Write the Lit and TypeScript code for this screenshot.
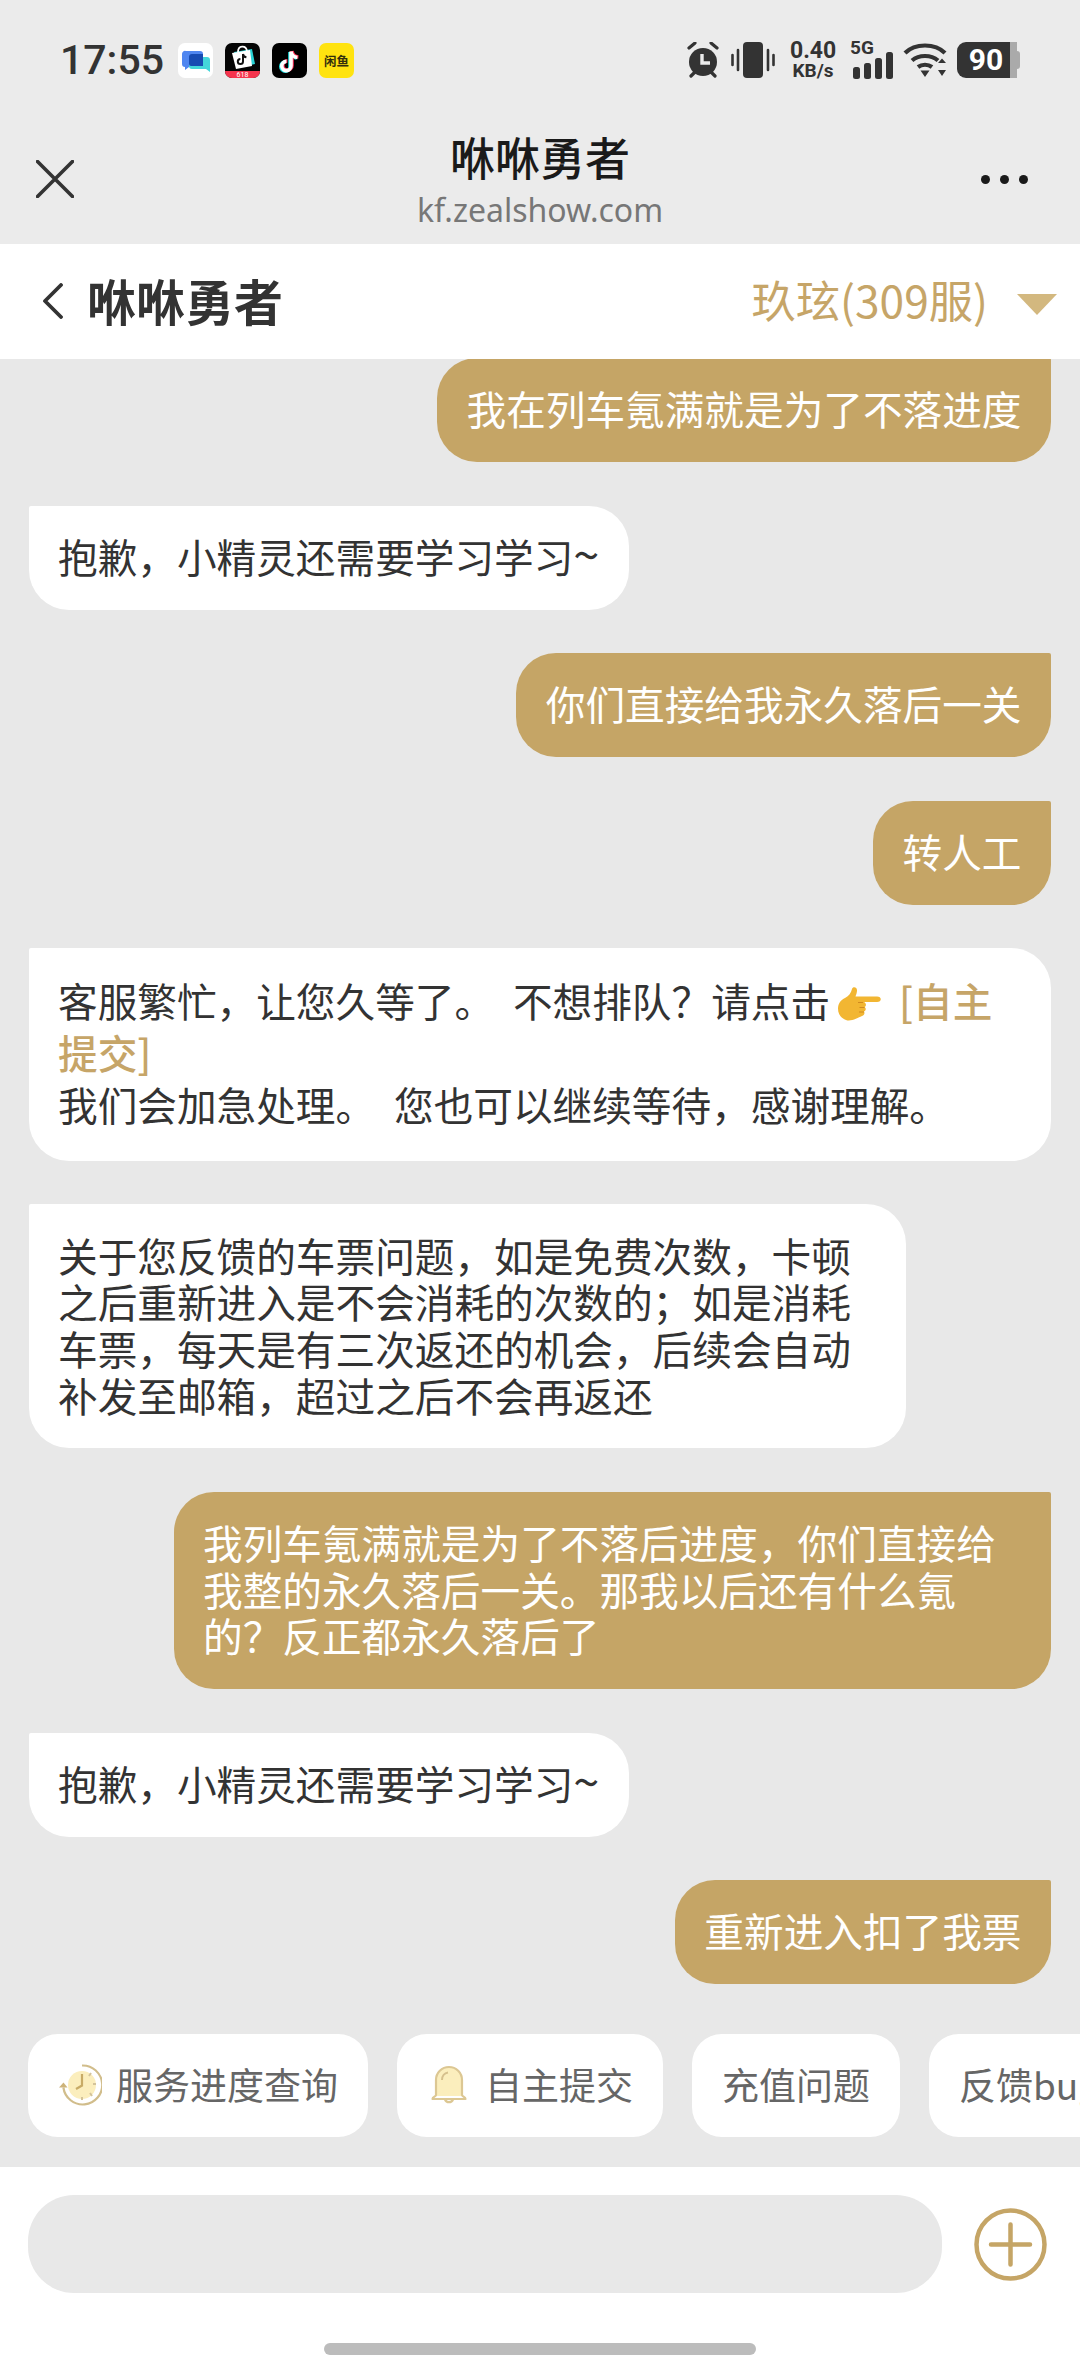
import { LitElement, html, css, svg } from "lit";
import { customElement } from "lit/decorators.js";

const messages = [
  { me: true, text: "我在列车氪满就是为了不落进度" },
  { me: false, text: "抱歉，小精灵还需要学习学习", wave: true },
  { me: true, text: "你们直接给我永久落后一关" },
  { me: true, text: "转人工" },
  { me: false, mixed: true },
  { me: false, text: "关于您反馈的车票问题，如是免费次数，卡顿之后重新进入是不会消耗的次数的；如是消耗车票，每天是有三次返还的机会，后续会自动补发至邮箱，超过之后不会再返还" },
  { me: true, text: "我列车氪满就是为了不落后进度，你们直接给我整的永久落后一关。那我以后还有什么氪的？反正都永久落后了" },
  { me: false, text: "抱歉，小精灵还需要学习学习", wave: true },
  { me: true, text: "重新进入扣了我票" },
];

const note = (color: string, dx: number, dy: number) => svg`
  <path transform="translate(${dx} ${dy})" d="M19 8v14.5a4.6 4.6 0 1 1-4.6-4.6M19 8c.4 3.4 3 5.8 6.4 6" fill="none" stroke=${color} stroke-width="3.6"/>`;

const clockIcon = html`<svg class="chip-icon" viewBox="0 0 44 44">
  <circle cx="24" cy="22" r="14" fill="#fbeebd"/>
  <path d="M24 2.5a19.5 19.5 0 1 1-18.6 22" fill="none" stroke="#d1bd8b" stroke-width="2.2"/>
  <path d="M1 24.5l4.5-5 4 5z" fill="#cdb37a"/>
  <path d="M24 11v11.5l-6 3.5" fill="none" stroke="#c8ab66" stroke-width="2.2"/>
  <path d="M33 10l-2 3M38 21h-3M34 33l-2-3M24 37v-3" stroke="#d3c39a" stroke-width="2"/>
</svg>`;

const bellIcon = html`<svg class="chip-icon" viewBox="0 0 44 44">
  <path d="M9 33V17a13 13 0 0 1 26 0v16z" fill="#fbeebd"/>
  <path d="M9 32V17a13 13 0 0 1 26 0v15c0 1.500 3.500 2 3.500 4h-33c0-2 3.500-2.500 3.500-4zM18 36.500a4.300 4.300 0 0 0 8 0" fill="none" stroke="#dcc793" stroke-width="2.200" stroke-linejoin="round"/>
  <path d="M15 17c0-4 2.500-7 6-7.500" fill="none" stroke="#d6c08d" stroke-width="2"/>
</svg>`;

const handIcon = html`<svg class="hand" viewBox="0 0 44 36">
  <path d="M1 23c0-6 3-9 7-11 4-2 6-5 7-9 .6-2.600 5.400-2.400 5 2-.3 2.500-1 4-1.500 5.500H40c5 0 5 5.500 0 5.500H27c2.500 1 2.500 4 .5 5 2 1 1.500 4-.5 4.500 1 1.500.3 4-2 4.500C21 31.500 14 36 9 34c-5-2-8-5.500-8-11.500z" fill="#f2b632"/>
  <path d="M26 16.500h-5M27.500 21.500h-5M27 26h-5" stroke="#d08a1f" stroke-width="1" fill="none"/>
</svg>`;

@customElement("app-root")
class AppRoot extends LitElement {
  static styles = css`
    :host {
      display: flex;
      flex-direction: column;
      width: 1080px;
      height: 2376px;
      overflow: hidden;
      background: #e8e8e8;
      font-family: "Noto Sans CJK SC", "Noto Sans", sans-serif;
      color: #333;
    }
    .top { background: #ebebeb; flex: none; }
    .status {
      height: 120px;
      display: flex;
      align-items: center;
      padding: 0 60px;
      box-sizing: border-box;
    }
    .time {
      font: 500 41px/1 Roboto, sans-serif;
      color: #333;
      margin-right: 17px;
      width: 101px;
    }
    .apps { display: flex; gap: 12px; }
    .apps svg { width: 35px; height: 35px; display: block; }
    .sys { margin-left: auto; display: flex; align-items: center; }
    .sys svg { display: block; }
    .vibrate { margin-left: 10px; }
    .speed {
      width: 46px;
      margin: 0 14px 0 15px;
      text-align: center;
      font-family: Roboto, sans-serif;
      font-weight: 700;
      color: #333;
    }
    .speed div:first-child { font-size: 23px; line-height: 21px; }
    .speed div:last-child { font-size: 19px; line-height: 19px; margin-left: -2px; margin-right: -2px; }
    .signal { width: 43px; margin-right: 10px; position: relative; height: 38px; }
    .signal svg { position: absolute; left: 0; top: 0; }
    .signal span {
      position: absolute;
      left: 0;
      top: -2px;
      font: 700 19px/18px Roboto, sans-serif;
      color: #333;
    }
    .battery { display: flex; align-items: center; margin-left: 10px; height: 36px; }
    .battery .level {
      width: 53px;
      height: 36px;
      box-sizing: border-box;
      padding-left: 5px;
      background: #333;
      border-radius: 9px 0 0 9px;
      color: #fff;
      font: 700 30px/36px Roboto, sans-serif;
      text-align: center;
    }
    .battery .rest { width: 7px; height: 36px; background: #aaa; }
    .battery .nub { width: 3px; height: 18px; background: #aaa; border-radius: 0 3px 3px 0; }

    .header {
      height: 123.500px;
      display: flex;
      align-items: center;
      justify-content: space-between;
      padding: 0 52px 0 36px;
      position: relative;
    }
    .header svg { display: block; }
    .heading {
      position: absolute;
      left: 0;
      right: 0;
      top: 12px;
      text-align: center;
    }
    .heading .name { font-size: 45px; line-height: 50px; font-weight: 500; color: #1a1a1a; }
    .heading .url { font: 400 32px/40px "Noto Sans", sans-serif; color: #777; margin-top: 8px; }
    .close { margin-top: -5px; }
    .dots { display: flex; gap: 9.500px; margin-top: -5px; }
    .dots i { width: 9.500px; height: 9.500px; border-radius: 50%; background: #1a1a1a; }

    .nav {
      flex: none;
      height: 115.500px;
      background: #fff;
      display: flex;
      align-items: center;
      padding: 0 23px 0 42px;
    }
    .nav svg { display: block; flex: none; }
    .nav .title { font-size: 49px; font-weight: 700; color: #333; margin-left: 24px; line-height: 60px; margin-top: -2px; }
    .nav .server { margin-left: auto; font-size: 44.300px; line-height: 60px; color: #c6a568; margin-top: -4px; }
    .nav .arrow { margin-left: 29px; margin-top: 6px; }

    .chat {
      flex: 1;
      min-height: 0;
      overflow: hidden;
      display: flex;
      flex-direction: column;
      justify-content: flex-end;
      padding: 0 0 29.600px 28.500px;
      background: #e8e8e8;
    }
    .list {
      display: flex;
      flex-direction: column;
      gap: 43.500px;
      padding-right: 29px;
      margin-bottom: 49.400px;
    }
    .bubble {
      box-sizing: border-box;
      width: fit-content;
      max-width: 877.500px;
      padding: 27.200px 29.500px 30.140px;
      font-size: 39.650px;
      line-height: 46.670px;
      border-radius: 40px;
      flex: none;
    }
    .bubble.them { background: #fff; color: #333; border-top-left-radius: 2px; }
    .bubble.me {
      background: #c5a566;
      color: #fff;
      align-self: flex-end;
      border-top-right-radius: 2px;
    }
    .bubble.mixed {
      max-width: 1022.500px;
      width: 1022.500px;
      padding-top: 25.700px;
      padding-bottom: 31.640px;
      line-height: 51.800px;
      word-spacing: 10px;
    }
    .bubble a { color: #c6a568; font-weight: 500; }
    .wave { font-size: 47px; line-height: 0; }
    .hand { display: inline-block; width: 44px; height: 36px; vertical-align: 3px; margin: -8px -1px -8px 7px; }

    .chips { display: flex; gap: 29px; flex: none; margin-left: -0.500px; }
    .chip {
      flex: none;
      height: 103.500px;
      box-sizing: border-box;
      padding: 0 30px 3px;
      border-radius: 30px;
      background: #fff;
      display: flex;
      align-items: center;
      gap: 14px;
      font-size: 37px;
      color: #666;
      white-space: nowrap;
    }
    .chip-icon { width: 44px; height: 44px; display: block; margin-top: 3px; }

    .bottom {
      flex: none;
      background: #fff;
      height: 209.300px;
      box-sizing: border-box;
      padding-top: 28.300px;
    }
    .composer { display: flex; align-items: center; padding: 0 33px 0 28px; }
    .input { width: 914px; height: 98px; border-radius: 46px; background: #e8e8e8; }
    .composer svg { display: block; margin-left: 32px; }
    .home { width: 432px; height: 12px; border-radius: 6px; background: #bcbcbc; margin: 50px auto 0; }
  `;

  render() {
    return html`
      <div class="top">
        <div class="status">
          <div class="time">17:55</div>
          <div class="apps">
            <svg viewBox="0 0 35 35">
              <rect width="35" height="35" rx="7" fill="#fff"/>
              <path d="M7 7h14a3 3 0 0 1 3 3v10a3 3 0 0 1-3 3H10l-4 3v-3a3 3 0 0 1-3-3V10a3 3 0 0 1 4-3z" fill="#4f86f0" transform="translate(1 1)"/>
              <path d="M14 14h15a3 3 0 0 1 3 3v12l-4-3H14a3 3 0 0 1-3-3v-6a3 3 0 0 1 3-3z" fill="#44d6da"/>
              <path d="M14 11h11v12H13a2 2 0 0 1-2-2V14a3 3 0 0 1 3-3z" fill="#174bb2"/>
            </svg>
            <svg viewBox="0 0 35 35">
              <rect width="35" height="35" rx="7" fill="#050505"/>
              <path d="M0 28h35a7 7 0 0 1-7 7H7a7 7 0 0 1-7-7z" fill="#f5344d"/>
              <text x="17.500" y="34" font-size="7" text-anchor="middle" fill="#fff" font-family="Roboto">618</text>
              <path d="M9 9l18-3 3 15-18 4z" fill="#29d3d6"/>
              <path d="M7 10l18-3 2 16-16 3z" fill="#fff"/>
              <path d="M13 9c0-7 8-7 9-1" fill="none" stroke="#fff" stroke-width="1.800"/>
              <path d="M18 11v7.500a2.600 2.600 0 1 1-2.600-2.600M18 11c.3 2 1.500 3 3.400 3.300" fill="none" stroke="#111" stroke-width="2"/>
            </svg>
            <svg viewBox="0 0 35 35">
              <rect width="35" height="35" rx="7" fill="#000"/>
              ${note("#25e4e6", -1, 1)}${note("#fe2c55", 1, 0)}${note("#fff", 0, 0.500)}
            </svg>
            <svg viewBox="0 0 35 35">
              <rect width="35" height="35" rx="7" fill="#ffe30f"/>
              <text x="17.500" y="22.500" font-size="12.500" font-weight="700" text-anchor="middle" fill="#33300c" font-family="Noto Sans CJK SC">闲鱼</text>
            </svg>
          </div>
          <div class="sys">
            <svg width="36" height="36" viewBox="0 0 36 36">
              <circle cx="18" cy="20" r="14" fill="#333"/>
              <path d="M4 6l6-5M32 6l-6-5M6 34l4-4M30 34l-4-4" stroke="#333" stroke-width="3.200" stroke-linecap="round"/>
              <path d="M17 12v9h8" fill="none" stroke="#ebebeb" stroke-width="3.400"/>
            </svg>
            <svg class="vibrate" width="44" height="36" viewBox="0 0 44 36">
              <rect x="12" width="20" height="36" rx="4" fill="#333"/>
              <path d="M1.500 13v10M7 8v20M37 8v20M42.500 13v10" stroke="#333" stroke-width="2.600" stroke-linecap="round"/>
            </svg>
            <div class="speed"><div>0.40</div><div>KB/s</div></div>
            <div class="signal">
              <span>5G</span>
              <svg width="43" height="38" viewBox="0 0 43 38">
                <rect x="3" y="26" width="7" height="12" rx="2.500" fill="#333"/>
                <rect x="14" y="22" width="7" height="16" rx="2.500" fill="#333"/>
                <rect x="25" y="17" width="7" height="21" rx="2.500" fill="#333"/>
                <rect x="36" y="11" width="7" height="27" rx="2.500" fill="#333"/>
              </svg>
            </div>
            <svg width="44" height="36" viewBox="0 0 44 36">
              <path d="M2 11C12 1 32 1 42 11M9 18.500c7-6 19-6 26 0M15 25c4-3 10-3 14 0" fill="none" stroke="#333" stroke-width="4.200"/>
              <path d="M17.500 28.500h9L22 35zM35 21l4-4.500 4 4.500zM35 28h8l-4 6z" fill="#333"/>
            </svg>
            <div class="battery">
              <div class="level">90</div>
              <div class="rest"></div>
              <div class="nub"></div>
            </div>
          </div>
        </div>
        <div class="header">
          <svg class="close" width="38" height="38" viewBox="0 0 38 38">
            <path d="M1.500 1.500l35 35M36.500 1.500l-35 35" stroke="#333" stroke-width="3.600" stroke-linecap="round"/>
          </svg>
          <div class="heading">
            <div class="name">咻咻勇者</div>
            <div class="url">kf.zealshow.com</div>
          </div>
          <div class="dots"><i></i><i></i><i></i></div>
        </div>
      </div>
      <div class="nav">
        <svg width="21" height="36" viewBox="0 0 21 36">
          <path d="M19 2L3 18l16 16" fill="none" stroke="#333" stroke-width="3.800" stroke-linecap="round" stroke-linejoin="round"/>
        </svg>
        <div class="title">咻咻勇者</div>
        <div class="server">玖玹(309服)</div>
        <svg class="arrow" width="40" height="21" viewBox="0 0 40 21"><path d="M0 0h40L20 21z" fill="#d3b87f"/></svg>
      </div>
      <div class="chat">
        <div class="list">
          ${messages.map((m) =>
            m.mixed
              ? html`<div class="bubble them mixed">客服繁忙，让您久等了。 不想排队？请点击${handIcon} <a>[自主提交]</a><br />我们会加急处理。 您也可以继续等待，感谢理解。</div>`
              : html`<div class="bubble ${m.me ? "me" : "them"}">${m.text}${m.wave ? html`<span class="wave">~</span>` : ""}</div>`
          )}
        </div>
        <div class="chips">
          <div class="chip">${clockIcon}服务进度查询</div>
          <div class="chip">${bellIcon}自主提交</div>
          <div class="chip">充值问题</div>
          <div class="chip">反馈bug</div>
        </div>
      </div>
      <div class="bottom">
        <div class="composer">
          <div class="input"></div>
          <svg width="73" height="73" viewBox="0 0 73 73">
            <circle cx="36.500" cy="36.500" r="34" fill="none" stroke="#c5a566" stroke-width="4.500"/>
            <path d="M36.500 16.500v40M17 36.500h39" stroke="#c5a566" stroke-width="4.500" stroke-linecap="round"/>
          </svg>
        </div>
        <div class="home"></div>
      </div>
    `;
  }
}
